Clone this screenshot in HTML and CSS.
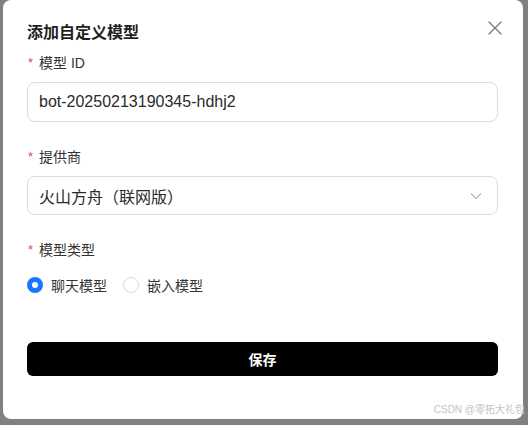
FILE: index.html
```html
<!DOCTYPE html>
<html lang="zh-CN">
<head>
<meta charset="utf-8">
<title>添加自定义模型</title>
<link rel="stylesheet" href="styles.css">
</head>
<body>
<div class="dialog">
  <div class="header">
    <h2 class="title">添加自定义模型</h2>
    <button class="close" aria-label="关闭">
      <svg width="14" height="14" viewBox="0 0 14 14"><path d="M1 1L13 13M13 1L1 13" stroke="#7a7a7a" stroke-width="1.4" fill="none" stroke-linecap="round"/></svg>
    </button>
  </div>
  <div class="field">
    <label class="label"><span class="req">*</span>模型 ID</label>
    <div class="input">bot-20250213190345-hdhj2</div>
  </div>
  <div class="field">
    <label class="label"><span class="req">*</span>提供商</label>
    <div class="input select">
      <span>火山方舟（联网版）</span>
      <svg class="chev" width="12" height="8" viewBox="0 0 12 8"><path d="M1 1.5L6 6.5L11 1.5" stroke="#b5b5b5" stroke-width="1.2" fill="none"/></svg>
    </div>
  </div>
  <div class="field">
    <label class="label"><span class="req">*</span>模型类型</label>
    <div class="radios">
      <span class="radio"><span class="dot checked"></span>聊天模型</span>
      <span class="radio"><span class="dot"></span>嵌入模型</span>
    </div>
  </div>
  <button class="save">保存</button>
  <div class="watermark">CSDN @零拓大礼包</div>
</div>
</body>
</html>
```
FILE: styles.css
```css
html, body {
  margin: 0;
  padding: 0;
}
body {
  width: 528px;
  height: 425px;
  background: #808080;
  font-family: "Liberation Sans", "Noto Sans CJK SC", sans-serif;
  overflow: hidden;
}
.dialog {
  position: relative;
  margin-left: 3px;
  width: 520px;
  height: 419px;
  box-sizing: border-box;
  background: #fff;
  border-radius: 8px;
  padding: 20px 25px 0 24px;
  display: flex;
  flex-direction: column;
}
.header {
  display: flex;
  justify-content: space-between;
  align-items: center;
  height: 22px;
}
.title {
  margin: 0;
  font-size: 16px;
  font-weight: 700;
  color: #1f1f1f;
  line-height: 22px;
  font-family: "Noto Sans CJK SC", sans-serif;
}
.close {
  border: 0;
  background: none;
  padding: 0;
  margin-right: -4px;
  margin-top: -6px;
  width: 14px;
  height: 14px;
  display: flex;
}
.field {
  display: flex;
  flex-direction: column;
}
.field + .field {
  margin-top: 24px;
}
.header + .field {
  margin-top: 10px;
}
.label {
  font-size: 14px;
  line-height: 22px;
  color: #333;
  display: flex;
  align-items: center;
  margin-bottom: 8px;
  padding-left: 1px;
}
.req {
  color: #e5484d;
  margin-right: 6px;
  font-size: 13px;
}
.input {
  height: 40px;
  box-sizing: border-box;
  border: 1px solid #dcdcdc;
  border-radius: 8px;
  padding: 0 11px;
  display: flex;
  align-items: center;
  font-size: 16px;
  color: #2a2a2a;
}
.select {
  justify-content: space-between;
  height: 39px;
}
.chev {
  margin-right: 4px;
}
.radios {
  display: flex;
  align-items: center;
  gap: 16px;
  margin-top: 5px;
  height: 22px;
}
.radio {
  display: flex;
  align-items: center;
  font-size: 14px;
  color: #333;
}
.dot {
  width: 16px;
  height: 16px;
  box-sizing: border-box;
  border-radius: 50%;
  border: 1px solid #d9d9d9;
  margin-right: 8px;
}
.dot.checked {
  border: 5px solid #1677ff;
}
.save {
  margin-top: 46px;
  height: 34px;
  border: 0;
  border-radius: 6px;
  background: #000;
  color: #fff;
  font-size: 14px;
  font-weight: 700;
  font-family: "Noto Sans CJK SC", sans-serif;
}
.watermark {
  position: absolute;
  right: -2px;
  bottom: 3px;
  font-size: 10px;
  color: #c4c4c4;
  font-family: "Liberation Sans", "Noto Sans CJK SC", sans-serif;
}
```
